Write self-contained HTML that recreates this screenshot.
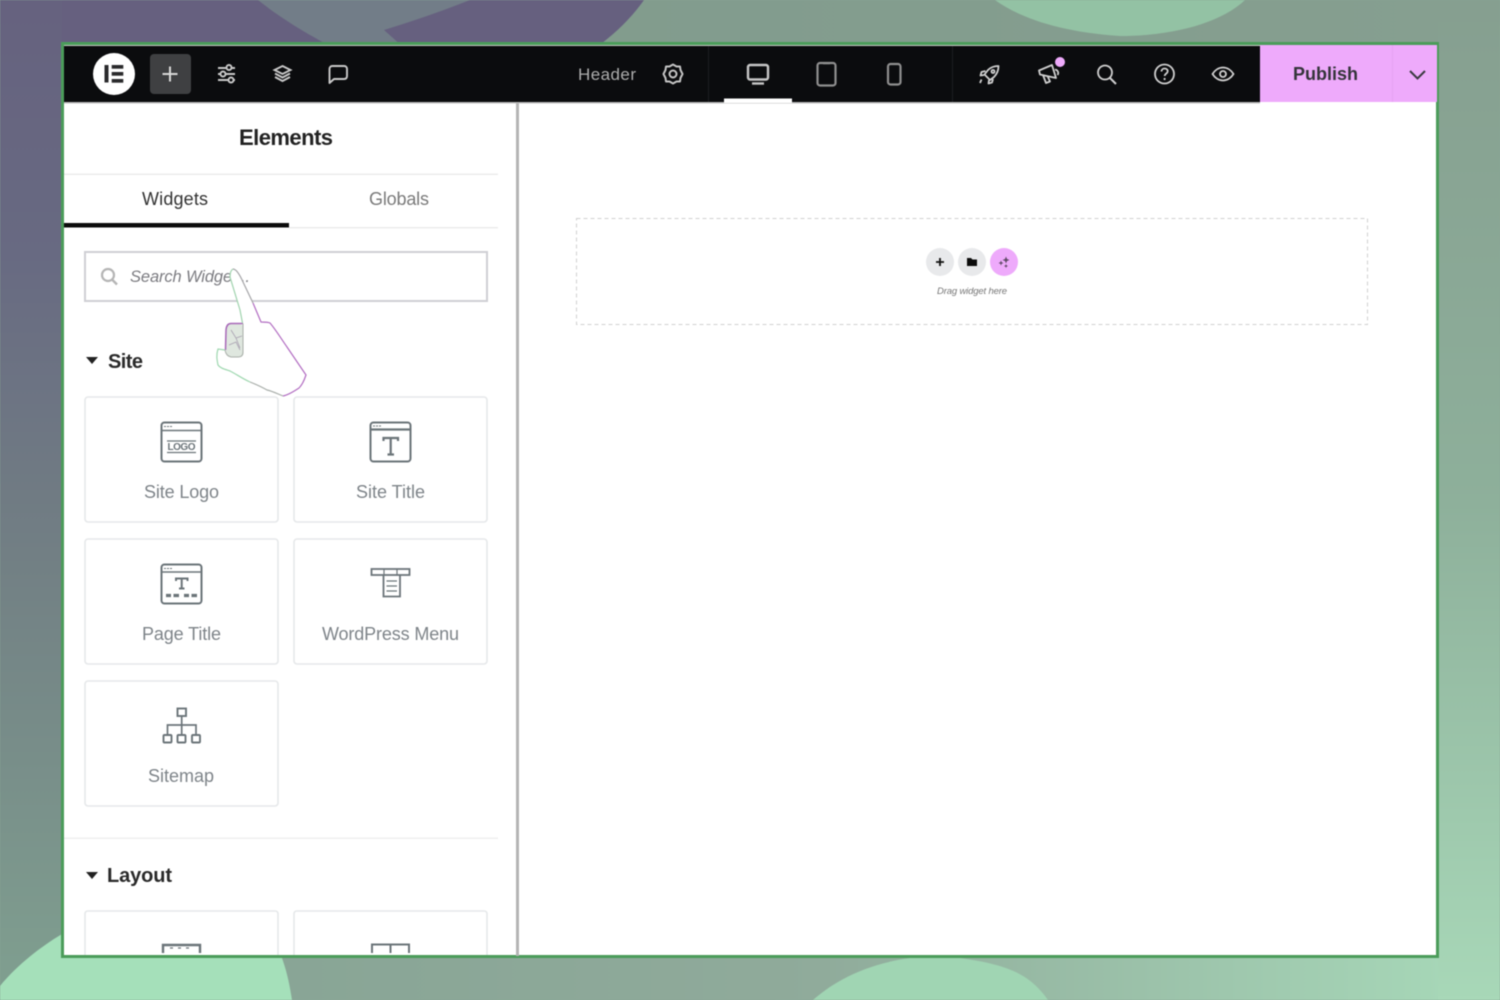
<!DOCTYPE html>
<html><head><meta charset="utf-8"><title>Elementor Header</title>
<style>
html,body{margin:0;padding:0;width:1500px;height:1000px;overflow:hidden;background:#8aa596}
svg{display:block;position:absolute;left:0;top:0;filter:blur(.45px)}
text{font-family:"Liberation Sans",sans-serif}
</style></head><body>
<svg width="1500" height="1000" viewBox="0 0 1500 1000" xmlns="http://www.w3.org/2000/svg">
<defs>
<linearGradient id="left" x1="0" y1="0" x2="0" y2="1">
<stop offset="0" stop-color="#66627f"/><stop offset=".25" stop-color="#686a82"/><stop offset=".55" stop-color="#727f84"/><stop offset="1" stop-color="#80a090"/>
</linearGradient>
<linearGradient id="right" x1="0" y1="0" x2="0" y2="1">
<stop offset="0" stop-color="#869f90"/><stop offset=".5" stop-color="#8eb09b"/><stop offset="1" stop-color="#a8d8b8"/>
</linearGradient>
<linearGradient id="bottom" x1="0" y1="0" x2="1" y2="0">
<stop offset="0" stop-color="#86a394"/><stop offset=".55" stop-color="#90ab9b"/><stop offset="1" stop-color="#a6d6b7"/>
</linearGradient>
<linearGradient id="topband" x1="0" y1="0" x2="1" y2="0">
<stop offset="0" stop-color="#7f9a8c"/><stop offset="1" stop-color="#869f90"/>
</linearGradient>
</defs>
<!-- background -->
<rect x="0" width="1500" height="1000" fill="#8aa596"/>
<rect x="0" width="62" height="1000" fill="url(#left)"/>
<rect x="1438" width="62" height="1000" fill="url(#right)"/>
<rect x="62" y="0" width="1376" height="46" fill="url(#topband)"/>
<path d="M62 0H644C630 20 612 36 598 46H62Z" fill="#66607f"/>
<path d="M258 0H470C440 12 410 22 384 30L402 46H330C300 30 278 16 258 0Z" fill="#727d88"/>
<path d="M995 0H1245C1220 24 1170 36 1120 36 1060 32 1020 18 995 0Z" fill="#93c2a4"/>
<rect x="62" y="958" width="1376" height="42" fill="url(#bottom)"/>
<path d="M0 986C18 964 42 946 62 934V958H282C288 975 290 988 292 1000H0Z" fill="#a5e0ba"/>
<path d="M1048 1000C1030 975 1010 965 960 958H910C860 965 830 985 813 1000Z" fill="#a0d5b3"/>

<!-- frame -->
<rect x="62.500" y="43.500" width="1375" height="913" fill="#fff" stroke="#4b9c5a" stroke-width="3"/>
<rect x="64" y="45" width="1373" height="1.500" fill="#c5c9c5"/>
<!-- toolbar -->
<rect x="64" y="46" width="1196" height="56" fill="#0b0c0e"/>
<rect x="64" y="102" width="1196" height="1.500" fill="#bdbdbd"/>
<rect x="1260" y="45" width="177" height="57" fill="#eeaafb"/>
<rect x="1392" y="45" width="1" height="57" fill="#e6a3f2"/>
<rect x="708" y="46" width="1" height="56" fill="#1c1d21"/>
<rect x="952" y="46" width="1" height="56" fill="#1c1d21"/>
<rect x="724" y="98.500" width="68" height="4.500" fill="#fff"/>

<circle cx="114" cy="74" r="21" fill="#fff"/>
<g fill="#2a2a2c"><rect x="104.500" y="65" width="4" height="17.500"/><rect x="111.700" y="65" width="11.600" height="3.700"/><rect x="111.700" y="72" width="11.600" height="3.700"/><rect x="111.700" y="79" width="11.600" height="3.700"/></g>
<rect x="150" y="54" width="41" height="40" rx="4" fill="#3f4042"/>
<path d="M170 66.500V81.500M162.500 74H177.500" stroke="#d8d8d8" stroke-width="2" fill="none"/>
<g stroke="#c9c9c9" stroke-width="1.900" fill="none">
<path d="M218 68H226M232 68H235M218 74H220M226 74H235M218 80H228M234 80H235"/>
<circle cx="229" cy="67.500" r="2.500"/><circle cx="223" cy="74" r="2.500"/><circle cx="231" cy="80" r="2.500"/>
<path d="M282.500 66L290.500 70 282.500 74 274.500 70Z"/>
<path d="M275 73.500L282.500 77.500 290 73.500M275 77L282.500 81 290 77"/>
<path d="M329.500 83V69C329.500 67.300 330.500 66 332.500 66H344C346 66 347 67.300 347 69V76C347 78 346 79 344 79H334Z" stroke-linejoin="round"/>
</g>
<text x="578" y="80" font-size="17" fill="#adadad" textLength="58">Header</text>
<g stroke="#c4c4c4" stroke-width="2" fill="none">
<path d="M673 64.500L676.500 66.500 680 66.500 680.500 70 682.500 74 680.500 78 680 81.500 676.500 81.500 673 83.500 669.500 81.500 666 81.500 665.500 78 663.500 74 665.500 70 666 66.500 669.500 66.500Z" stroke-linejoin="round"/>
<circle cx="673" cy="74" r="3.500"/>
</g>
<g stroke="#c6c6c6" fill="none">
<rect x="748" y="65" width="20" height="14.500" rx="2" stroke-width="2.400"/>
<path d="M752 83.500H764" stroke-width="2.400"/>
</g>
<g stroke="#8f8f8f" stroke-width="2.200" fill="none">
<rect x="817.500" y="63" width="18" height="22.500" rx="2.500"/>
<path d="M823 63.500H830" stroke-width="1.500"/>
<rect x="888" y="64" width="12.500" height="20.500" rx="2.500"/>
</g>
<g stroke="#cfcfcf" stroke-width="1.800" fill="none" stroke-linejoin="round">
<path d="M988 70C991 67 995 66 998.500 66 998.500 70 997 74 994 77L990 80 984.500 74.500Z"/>
<circle cx="993" cy="71.500" r="1.500"/>
<path d="M985.500 71L981.500 72 980.500 75.500 984 75M993 79L992 82.500 988.500 83.500 989 80M981.500 79.500L980 83"/>
<path d="M1052 65L1056 78 1040 74.500 1039 70.500Z"/>
<path d="M1043 75L1046 83 1050 81.500 1047.500 76"/>
<path d="M1055 69.500C1058 70 1059 73 1057.500 75"/>
<circle cx="1105" cy="72.500" r="7"/><path d="M1110 78L1116 84" stroke-width="2"/>
<circle cx="1164.500" cy="74" r="9.500"/>
<path d="M1161.500 71.500C1161.500 69.500 1163 68.500 1164.500 68.500 1166.500 68.500 1167.700 69.800 1167.700 71.300 1167.700 73.500 1164.700 73.700 1164.700 76"/>
<path d="M1212.500 74C1215 70 1219 67.500 1223 67.500 1227 67.500 1231 70 1233.500 74 1231 78 1227 80.500 1223 80.500 1219 80.500 1215 78 1212.500 74Z"/>
<circle cx="1223" cy="74" r="3"/>
</g>
<circle cx="1164.600" cy="79" r="1.100" fill="#cfcfcf"/>
<circle cx="1060" cy="62" r="5" fill="#eeaafb"/>
<text x="1293" y="80" font-size="18" font-weight="700" fill="#34343a" textLength="65">Publish</text>
<path d="M1410 71L1417.500 78.500 1425 71" stroke="#3a3a40" stroke-width="2" fill="none"/>

<!-- panel -->
<rect x="516" y="103" width="3" height="853" fill="#b4b4b4"/>
<text x="239" y="145" font-size="22" font-weight="700" fill="#222" textLength="94">Elements</text>
<rect x="64" y="173.500" width="434" height="1.500" fill="#ececec"/>
<text x="142" y="205" font-size="18" fill="#333" textLength="66">Widgets</text>
<text x="369" y="205" font-size="18" fill="#7a7a7a" textLength="60">Globals</text>
<rect x="64" y="223" width="225" height="4.500" fill="#0c0c0c"/>
<rect x="289" y="227" width="209" height="1.500" fill="#ececec"/>
<rect x="85" y="252" width="402" height="49" fill="#fff" stroke="#cfcfd4" stroke-width="2"/>
<circle cx="108" cy="275" r="6" fill="none" stroke="#b5b5b5" stroke-width="2.200"/>
<path d="M112.500 280L117 284.500" stroke="#b5b5b5" stroke-width="2.400"/>
<text x="130" y="282" font-size="16.500" font-style="italic" fill="#7b7b80" textLength="120">Search Widget...</text>

<path d="M86 357H98L92 364Z" fill="#222"/>
<text x="108" y="368" font-size="20" font-weight="700" fill="#2a2a2a" textLength="35">Site</text>

<g fill="#fff" stroke="#e6e8ea" stroke-width="1.600">
<rect x="85" y="397" width="193" height="125" rx="3"/>
<rect x="294" y="397" width="193" height="125" rx="3"/>
<rect x="85" y="539" width="193" height="125" rx="3"/>
<rect x="294" y="539" width="193" height="125" rx="3"/>
<rect x="85" y="681" width="193" height="125" rx="3"/>
<path d="M85 955V914Q85 911 88 911H275Q278 911 278 914V955M294 955V914Q294 911 297 911H484Q487 911 487 914V955" fill="#fff"/>
</g>
<g font-size="18" fill="#7e8489">
<text x="144" y="498" textLength="75">Site Logo</text>
<text x="356" y="498" textLength="69">Site Title</text>
<text x="142" y="640" textLength="79">Page Title</text>
<text x="322" y="640" textLength="137">WordPress Menu</text>
<text x="148" y="782" textLength="66">Sitemap</text>
</g>

<!-- widget icons -->
<g stroke="#6b7479" stroke-width="2" fill="none">
<rect x="161.500" y="422.500" width="40" height="39" rx="3"/>
<path d="M162 430.500H201" stroke-width="1.500"/>
<path d="M164 426.500H173" stroke-width="1" stroke-dasharray="2 1"/>
<path d="M167 441H196M167 452.500H196" stroke-width="1.200"/>
<rect x="370.500" y="422.500" width="40" height="39" rx="3"/>
<path d="M371 429.500H410" stroke-width="2.200"/>
<path d="M373 426H382" stroke-width="1" stroke-dasharray="2 1"/>
<path d="M383.500 441V438H398V441M390.700 438V454.500M387.500 454.500H394" stroke-width="2.200"/>
<rect x="161.500" y="564.500" width="40" height="39" rx="3"/>
<path d="M162 572H201" stroke-width="1.500"/>
<path d="M164 568.500H173" stroke-width="1" stroke-dasharray="2 1"/>
<path d="M176 581V578.500H187.500V581M181.700 578.500V588.500M179 588.500H184.500" stroke-width="2"/>
<path d="M166 595.500H171M173.500 595.500H179M184 595.500H189M191.500 595.500H197" stroke-width="3.200"/>
<rect x="371.500" y="569" width="38" height="6" stroke-width="1.800"/>
<path d="M384 569V575M397 569V575" stroke-width="1.200"/>
<path d="M383.500 575V596.500H400V575" stroke-width="1.800"/>
<path d="M386.500 581H397M386.500 586H397M386.500 591H397" stroke-width="1.300"/>
<rect x="177.500" y="708.500" width="8.500" height="7.500" stroke-width="1.900"/>
<path d="M181.700 716V735M167.500 735V725H196V735" stroke-width="1.700"/>
<rect x="163.500" y="735" width="8" height="7.500" rx="1" stroke-width="1.900"/>
<rect x="177.500" y="735" width="8" height="7.500" rx="1" stroke-width="1.900"/>
<rect x="192" y="735" width="8" height="7.500" rx="1" stroke-width="1.900"/>
<path d="M163 953V945H200V953" stroke-width="2.400"/>
<path d="M170 948H173M178 948H181M186 948H189" stroke-width="1.300"/>
<path d="M372 953V944.500H409V953M390.500 944.500V953" stroke-width="2"/>
</g>
<text x="167.500" y="450" font-size="10" font-weight="700" fill="#6b7479" textLength="28">LOGO</text>

<rect x="64" y="837.500" width="434" height="1.500" fill="#efefef"/>
<path d="M86 872H98L92 879Z" fill="#222"/>
<text x="107" y="882" font-size="20" font-weight="700" fill="#2a2a2a" textLength="65">Layout</text>

<!-- hand cursor -->
<path d="M233 269C236 269 239 273 243 282L253 303 261 322C265 322 268 322 270 323 276 330 282 340 287 347L306 375C304 381 302 385 299 388 293 392 288 395 283 396 278 394 272 391 267 390 260 386 255 384 250 382 243 379 236 374 230 371 224 369 220 368 218 365 217 360 216 355 218 349L225 350 226 324 243 323 240 310 230 277C230 273 231 270 233 269Z" fill="#fff"/>
<rect x="226" y="324" width="17.500" height="33" rx="4" fill="#dfe7df"/>
<path d="M231 330L236 338 240 348M236 338L242 336M229 345L236 342 240 350" stroke="#a8a0b0" stroke-width=".8" fill="none"/>
<path d="M225.500 350L226 330Q226.500 323.500 231 323.500H243" stroke="#a868b8" stroke-width="1.500" fill="none"/>
<path d="M243 323.500V352Q243 357 238 357H231Q226 356 225 350" stroke="#a9afa9" stroke-width="1" fill="none"/>
<path d="M242.500 323L240 310 230 277C230 273 231 270 233 269" stroke="#9fd3ad" stroke-width="1.200" fill="none"/>
<path d="M233 269C236 269 239 273 243 282L253 303" stroke="#a5a5a8" stroke-width="1.200" fill="none"/>
<path d="M253 303L261 322C265 322 268 322 270 323 276 330 282 340 287 347L306 375C304 381 302 385 299 388 293 392 288 395 283 396" stroke="#b26dc2" stroke-width="1.200" fill="none"/>
<path d="M283 396C278 394 272 391 267 390 260 386 255 384 250 382" stroke="#a9aeaa" stroke-width="1.200" fill="none"/>
<path d="M250 382C243 379 236 374 230 371 224 369 220 368 218 365 217 360 216 355 218 349L225 350" stroke="#9fd8b0" stroke-width="1.200" fill="none"/>

<!-- canvas -->
<rect x="576.500" y="218.500" width="791" height="106" fill="none" stroke="#d0d0d0" stroke-width="1" stroke-dasharray="4 3"/>
<circle cx="940" cy="262" r="14" fill="#e8e9eb"/>
<circle cx="972" cy="262" r="14" fill="#e8e9eb"/>
<circle cx="1004" cy="262" r="14" fill="#eeaafb"/>
<path d="M940 258V266M936 262H944" stroke="#111" stroke-width="1.800"/>
<path d="M967 258H971L972.500 259.500H977V266H967Z" fill="#0c0c0c"/>
<path d="M1006 256.500L1007 259 1009.500 260 1007 261 1006 263.500 1005 261 1002.500 260 1005 259ZM1001 260.500L1001.700 262.300 1003.500 263 1001.700 263.700 1001 265.500 1000.300 263.700 998.500 263 1000.300 262.300ZM1006 264L1006.600 265.400 1008 266 1006.600 266.600 1006 268 1005.400 266.600 1004 266 1005.400 265.400Z" fill="#5d4a64"/>
<text x="937" y="294" font-size="9.500" font-style="italic" fill="#777" textLength="70">Drag widget here</text>
</svg>
</body></html>
